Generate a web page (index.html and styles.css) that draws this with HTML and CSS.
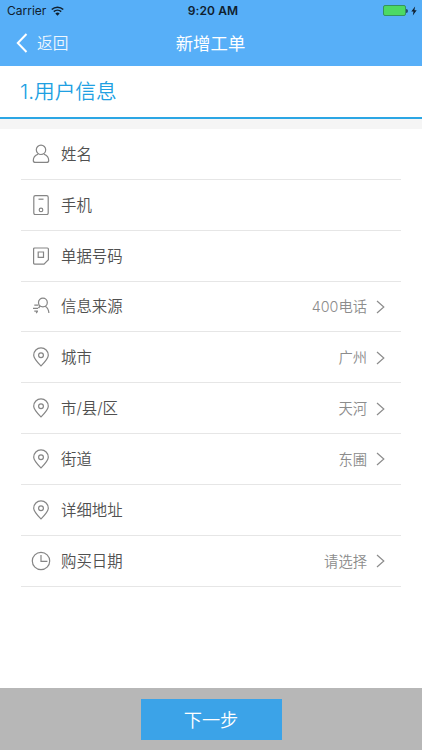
FILE: index.html
```html
<!DOCTYPE html>
<html lang="zh-CN">
<head>
    <meta charset="UTF-8">
    <meta name="viewport" content="width=device-width, initial-scale=1.0">
    <title>新增工单</title>
    <link rel="stylesheet" href="styles.css">
</head>
<body>
    <svg class="sprite" aria-hidden="true">
        <symbol id="user" viewBox="0 0 20 20"><circle cx="10" cy="5.8" r="4.7"/><path d="M7 10.2C4.2 11.2 2.3 13.4 2.3 16.4c0 1.4.8 2 2.2 2h11c1.4 0 2.2-.6 2.2-2 0-3-1.9-5.2-4.7-6.2"/></symbol>
        <symbol id="phone" viewBox="0 0 20 20"><rect x="2.8" y=".6" width="14.4" height="19" rx="1.6"/><path d="M7.5 4.2h5"/><circle cx="10" cy="14.9" r="1.8"/></symbol>
        <symbol id="bill" viewBox="0 0 20 20"><path d="M3.6 2h12.8q1 0 1 1v10.7l-4.4 4.4H3.6q-1 0-1-1V3q0-1 1-1z"/><path d="M7.2 6h5.3v5.4H7.2z"/></symbol>
        <symbol id="source" viewBox="0 0 20 20"><circle cx="11.9" cy="6.5" r="4.4"/><path d="M14.2 10.2c2 1.2 3.5 3.5 3.7 6.8M9.4 10.1c-.8.6-1.4 1.2-1.9 2M3.3 9.2h4.2M2 12.3h5M3.3 15.2h3.6M6.6 15.2l-1.4 1.9"/></symbol>
        <symbol id="pin" viewBox="0 0 20 20"><path d="M10 18.9C6.2 15 2.7 11.5 2.7 8.2a7.3 7.3 0 0 1 14.6 0c0 3.3-3.5 6.8-7.3 10.7z"/><circle cx="10" cy="8.3" r="2.4"/></symbol>
        <symbol id="clock" viewBox="0 0 20 20"><circle cx="10" cy="10" r="8.7"/><path d="M10 4v6.4h6.4"/></symbol>
        <symbol id="arrow" viewBox="0 0 9 14"><path d="M1 1l6.8 6L1 13"/></symbol>
    </svg>

    <header class="header">
        <div class="status">
            <div class="carrier">
                <span>Carrier</span>
                <svg class="wifi" viewBox="0 0 12 9"><path d="M.7 3.1a7.7 7.7 0 0 1 10.6 0M2.6 5.1a5 5 0 0 1 6.8 0"/><path class="solid" d="M6 8.8L4 6.7a3 3 0 0 1 4 0z"/></svg>
            </div>
            <div class="time">9:20 AM</div>
            <div class="power">
                <span class="battery"></span>
                <span class="battery-tip"></span>
                <svg class="bolt" viewBox="0 0 6 10"><path d="M4.1.5L.3 5.6h2.2L1.8 9.5l3.9-5.2H3.4z"/></svg>
            </div>
        </div>
        <nav class="nav">
            <a class="back">
                <svg class="back-arrow" viewBox="0 0 12 20"><path d="M10.5 1L1.8 10l8.7 9"/></svg>
                <span>返回</span>
            </a>
            <h1 class="title">新增工单</h1>
        </nav>
    </header>

    <h2 class="step">1.用户信息</h2>

    <main class="form">
        <div class="row"><svg class="icon"><use href="#user"/></svg><span class="label">姓名</span></div>
        <div class="row"><svg class="icon"><use href="#phone"/></svg><span class="label">手机</span></div>
        <div class="row"><svg class="icon"><use href="#bill"/></svg><span class="label">单据号码</span></div>
        <div class="row"><svg class="icon"><use href="#source"/></svg><span class="label">信息来源</span><span class="value">400电话</span><svg class="arrow"><use href="#arrow"/></svg></div>
        <div class="row"><svg class="icon"><use href="#pin"/></svg><span class="label">城市</span><span class="value">广州</span><svg class="arrow"><use href="#arrow"/></svg></div>
        <div class="row"><svg class="icon"><use href="#pin"/></svg><span class="label">市/县/区</span><span class="value">天河</span><svg class="arrow"><use href="#arrow"/></svg></div>
        <div class="row"><svg class="icon"><use href="#pin"/></svg><span class="label">街道</span><span class="value">东圃</span><svg class="arrow"><use href="#arrow"/></svg></div>
        <div class="row"><svg class="icon"><use href="#pin"/></svg><span class="label">详细地址</span></div>
        <div class="row"><svg class="icon"><use href="#clock"/></svg><span class="label">购买日期</span><span class="value">请选择</span><svg class="arrow"><use href="#arrow"/></svg></div>
    </main>

    <footer class="footer">
        <button class="next">下一步</button>
    </footer>
</body>
</html>
```
FILE: styles.css
```css
*, *::before, *::after {
    box-sizing: border-box;
}
body {
    margin: 0;
    height: 750px;
    display: flex;
    flex-direction: column;
    overflow: hidden;
    background: #fff;
    color: #505050;
    font-family: Inter, "Noto Sans CJK SC", sans-serif;
    font-weight: 350;
}
svg {
    display: block;
    flex: none;
    fill: none;
    stroke: currentColor;
}
.sprite { display: none; }

.header {
    height: 66px;
    background: #57aff8;
    color: #fff;
}
.status {
    display: grid;
    grid-template-columns: 1fr auto 1fr;
    align-items: center;
    height: 22px;
    padding: 0 5px 0 7px;
    color: #10202e;
    font: 400 12px/22px Inter, sans-serif;
}
.carrier {
    display: flex;
    align-items: center;
    gap: 5px;
}
.wifi {
    width: 13px;
    height: 10px;
    margin-top: -1px;
    stroke-width: 1.5;
}
.wifi .solid { fill: currentColor; stroke: none; }
.time {
    padding-left: 2px;
    font-weight: 600;
    letter-spacing: .1px;
}
.power {
    display: flex;
    align-items: center;
    justify-content: flex-end;
    margin-top: -1px;
}
.battery {
    width: 23px;
    height: 11px;
    border: 1px solid #35945e;
    border-radius: 2px;
    background: #4cd964;
}
.battery-tip {
    width: 2px;
    height: 4px;
    margin-right: 3px;
    border-radius: 0 2px 2px 0;
    background: #254d6e;
}
.bolt {
    width: 6px;
    height: 10px;
    fill: currentColor;
    stroke: none;
}
.nav {
    display: grid;
    grid-template-columns: 1fr auto 1fr;
    align-items: center;
    height: 42px;
    padding: 0 17px 0 16px;
}
.back {
    display: flex;
    align-items: center;
    gap: 9px;
    font-size: 15.7px;
    line-height: 24px;
}
.back span {
    padding-top: 2px;
    opacity: .9;
}
.back-arrow {
    width: 12px;
    height: 20px;
    stroke-width: 2;
}
.title {
    margin: 0;
    padding-top: 2px;
    font-size: 17.4px;
    font-weight: 400;
    line-height: 24px;
}

.step {
    height: 53px;
    margin: 0;
    padding-left: 20px;
    border-bottom: 2px solid #2ba6e4;
    color: #20a0e2;
    font-size: 20.7px;
    font-weight: 350;
    line-height: 52px;
}

.form {
    flex: 1;
    padding: 0 21px;
    border-top: 10px solid #f5f5f5;
}
.row {
    display: flex;
    align-items: center;
    height: 50.85px;
    padding: 0 16px 0 10px;
    border-bottom: 1px solid #e6e6e6;
}
.icon {
    width: 20px;
    height: 20px;
    margin-right: 10px;
    color: #858585;
    stroke-width: 1.2;
}
.label {
    padding-top: 2px;
    font-size: 15.4px;
    line-height: 24px;
}
.value {
    margin-left: auto;
    padding-top: 2px;
    color: #8c8c8c;
    font-size: 14.3px;
    line-height: 24px;
}
.arrow {
    width: 9px;
    height: 14px;
    margin: 1px 0 0 9px;
    color: #8c8c8c;
    stroke-width: 1.2;
}

.footer {
    display: flex;
    justify-content: center;
    height: 62px;
    padding-top: 11px;
    background: #b7b7b7;
}
.next {
    width: 141px;
    height: 41px;
    padding: 0;
    border: 0;
    background: #3ba3e8;
    color: #fff;
    font: inherit;
    font-size: 18.2px;
    line-height: 40px;
}
```
